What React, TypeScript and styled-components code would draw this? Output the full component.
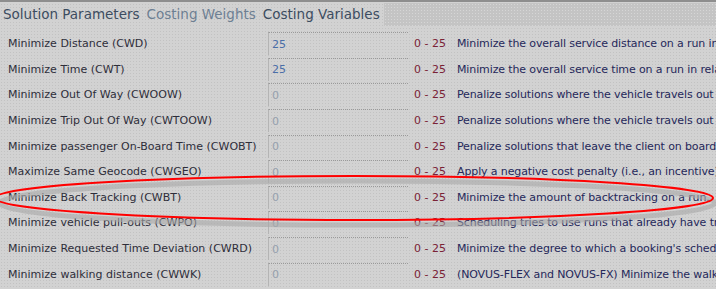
import styled, { createGlobalStyle } from "styled-components";

const GlobalStyle = createGlobalStyle`
  html, body {
    margin: 0;
    padding: 0;
    background: #d3d3d3;
  }
  body {
    font-family: "DejaVu Sans", Verdana, sans-serif;
  }
`;

const dots = `
  background-color: #d2d2d2;
  background-image: radial-gradient(#c2c2c2 0.6px, transparent 0.8px);
  background-size: 3px 3px;
`;

type Row = { label: string; value: string; desc: string };

const rows: Row[] = [
  { label: "Minimize Distance (CWD)", value: "25", desc: "Minimize the overall service distance on a run in relation to the number of trips" },
  { label: "Minimize Time (CWT)", value: "25", desc: "Minimize the overall service time on a run in relation to the number of trips" },
  { label: "Minimize Out Of Way (CWOOW)", value: "0", desc: "Penalize solutions where the vehicle travels out of the way" },
  { label: "Minimize Trip Out Of Way (CWTOOW)", value: "0", desc: "Penalize solutions where the vehicle travels out of the way with a client" },
  { label: "Minimize passenger On-Board Time (CWOBT)", value: "0", desc: "Penalize solutions that leave the client on board too long" },
  { label: "Maximize Same Geocode (CWGEO)", value: "0", desc: "Apply a negative cost penalty (i.e., an incentive) for grouping trips" },
  { label: "Minimize Back Tracking (CWBT)", value: "0", desc: "Minimize the amount of backtracking on a run." },
  { label: "Minimize vehicle pull-outs (CWPO)", value: "0", desc: "Scheduling tries to use runs that already have trips" },
  { label: "Minimize Requested Time Deviation (CWRD)", value: "0", desc: "Minimize the degree to which a booking's scheduled time deviates" },
  { label: "Minimize walking distance (CWWK)", value: "0", desc: "(NOVUS-FLEX and NOVUS-FX) Minimize the walking distance" },
];

export default function App() {
  return (
    <>
      <GlobalStyle />
      <Page>
        <TabBar>
          <Tab $tone="dark">Solution Parameters</Tab>
          <Tab $tone="light">Costing Weights</Tab>
          <Tab $tone="dark">Costing Variables</Tab>
          <TabFill />
        </TabBar>
        <Grid>
          {rows.map((r) => (
            <FieldRow key={r.label}>
              <Label>{r.label}</Label>
              <ValueBox $strong={r.value !== "0"}>{r.value}</ValueBox>
              <Range>0 - 25</Range>
              <Desc>{r.desc}</Desc>
            </FieldRow>
          ))}
        </Grid>
        <Annotation viewBox="0 0 716 289" width="716" height="289">
          <ellipse cx="357" cy="203" rx="358" ry="22" fill="none" stroke="#a8a8a8" strokeWidth="5" opacity="0.6" />
          <ellipse cx="354" cy="198" rx="359" ry="22" fill="none" stroke="#ff0000" strokeWidth="2" />
        </Annotation>
      </Page>
    </>
  );
}

const Page = styled.div`
  position: relative;
  width: 716px;
  height: 289px;
  overflow: hidden;
  ${dots}
`;

const TabBar = styled.div`
  display: flex;
  align-items: stretch;
  height: 26px;
  border-top: 2px solid #8e8e8e;
  box-sizing: border-box;
`;

const Tab = styled.div<{ $tone: "dark" | "light" }>`
  display: flex;
  align-items: center;
  padding: 0 4px 0 3px;
  font-size: 13.5px;
  color: ${(p) => (p.$tone === "dark" ? "#3c4c60" : "#6d7f92")};
  white-space: nowrap;
`;

const TabFill = styled.div`
  flex: 1;
  margin: 1px 0 0 0;
  background-color: #c4c4c4;
  background-image: radial-gradient(#d6d6d6 0.6px, transparent 0.8px);
  background-size: 3px 3px;
`;

const Grid = styled.div`
  display: flex;
  flex-direction: column;
  padding-top: 5px;
`;

const FieldRow = styled.div`
  display: grid;
  grid-template-columns: 260px 140px 49px 1fr;
  align-items: center;
  height: 25.6px;
  padding-left: 8px;
  font-size: 11px;
  white-space: nowrap;
`;

const Label = styled.div`
  color: #2e2e3a;
`;

const ValueBox = styled.div<{ $strong: boolean }>`
  box-sizing: border-box;
  height: 23px;
  display: flex;
  align-items: center;
  padding-left: 3px;
  border-top: 1px dotted #9a9a9a;
  border-left: 1px solid #b4b4b4;
  color: ${(p) => (p.$strong ? "#4a6ea8" : "#95a0ae")};
`;

const Range = styled.div`
  padding-left: 6px;
  color: #7a2236;
`;

const Desc = styled.div`
  color: #25285a;
  letter-spacing: -0.12px;
  overflow: hidden;
`;

const Annotation = styled.svg`
  position: absolute;
  left: 0;
  top: 0;
  pointer-events: none;
`;
